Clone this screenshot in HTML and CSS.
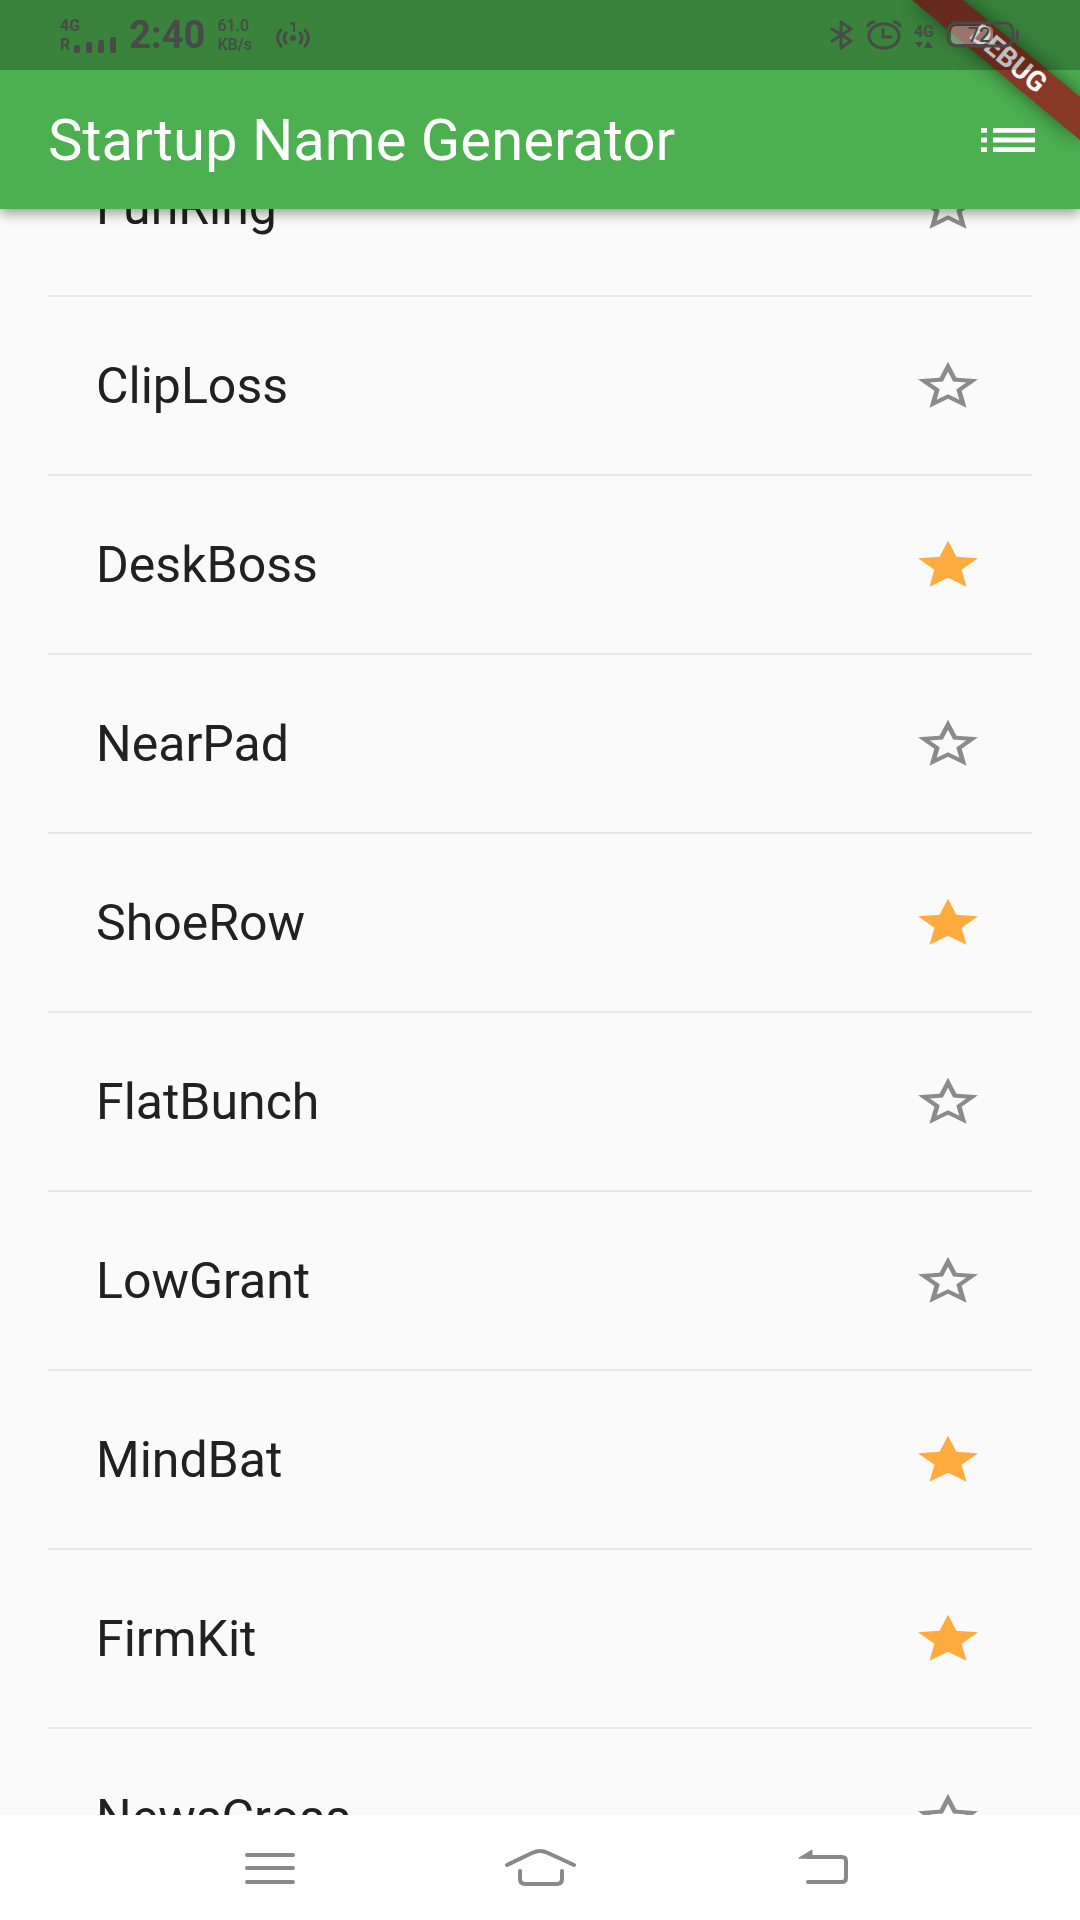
FILE: index.html
```html
<!DOCTYPE html>
<html lang="en">
<head>
    <meta charset="UTF-8">
    <meta name="viewport" content="width=device-width, initial-scale=1.0">
    <title>Startup Name Generator</title>
    <link rel="stylesheet" href="styles.css">
</head>
<body>
    <!-- Shared star shapes -->
    <svg class="defs" aria-hidden="true">
        <symbol id="star" viewBox="0 0 24 24" preserveAspectRatio="none">
            <path d="M12 17.27L18.18 21l-1.64-7.03L22 9.24l-7.19-.61L12 2 9.19 8.63 2 9.24l5.46 4.73L5.82 21z"/>
        </symbol>
        <symbol id="star-border" viewBox="0 0 24 24" preserveAspectRatio="none">
            <path d="M22 9.24l-7.19-.62L12 2 9.19 8.63 2 9.24l5.46 4.73L5.82 21 12 17.27 18.18 21l-1.63-7.03L22 9.24zM12 15.4l-3.76 2.27 1-4.28-3.32-2.88 4.38-.38L12 6.1l1.71 4.04 4.38.38-3.32 2.88 1 4.28L12 15.4z"/>
        </symbol>
    </svg>

    <header class="header">
        <div class="status-bar">
            <div class="status-left">
                <div class="network">
                    <span>4G</span>
                    <span class="signal">R
                        <svg width="43" height="16" viewBox="0 0 43 16">
                            <rect x="0" y="8" width="6" height="8" rx="2"/>
                            <rect x="12" y="5" width="6" height="11" rx="2"/>
                            <rect x="24" y="3" width="6" height="13" rx="2"/>
                            <rect x="36" y="0" width="6" height="16" rx="2"/>
                        </svg>
                    </span>
                </div>
                <span class="time">2:40</span>
                <div class="speed"><span>61.0</span><span>KB/s</span></div>
                <svg class="hotspot" width="34" height="28" viewBox="0 0 34 28">
                    <circle cx="17" cy="17" r="3"/>
                    <path class="line" d="M10 12q-4 5 0 10M5 9q-7 8 0 16M24 12q4 5 0 10M29 9q7 8 0 16"/>
                    <path class="thin" d="M14 3l4-1v9"/>
                </svg>
            </div>
            <div class="status-right">
                <svg width="24" height="30" viewBox="0 0 24 30">
                    <path class="line" d="M2 9l19 12-10 7V2l10 7L2 21"/>
                </svg>
                <svg width="36" height="30" viewBox="0 0 36 30">
                    <ellipse class="line" cx="18" cy="16" rx="15" ry="12"/>
                    <path class="line" d="M17 9v8h8M2 6q2-4 6-4M34 6q-2-4-6-4"/>
                </svg>
                <div class="data">
                    <span>4G</span>
                    <svg width="18" height="8" viewBox="0 0 18 8"><path d="M0 1h8l-4 6zM9 7h9l-5-7z"/></svg>
                </div>
                <svg class="battery" width="74" height="28" viewBox="0 0 74 28">
                    <rect class="charge" x="5" y="5" width="42" height="18" rx="5"/>
                    <rect class="line" x="2" y="2" width="65" height="23" rx="8"/>
                    <path d="M70 8q3 1 3 6t-3 6z"/>
                    <text x="33" y="21" text-anchor="middle">72</text>
                </svg>
            </div>
        </div>
        <div class="app-bar">
            <h1 class="title">Startup Name Generator</h1>
            <button class="icon-button" aria-label="Saved names">
                <svg class="icon" viewBox="0 0 24 24" preserveAspectRatio="none">
                    <path d="M3 13h2v-2H3v2zm0 4h2v-2H3v2zm0-8h2V7H3v2zm4 4h14v-2H7v2zm0 4h14v-2H7v2zM7 7v2h14V7H7z"/>
                </svg>
            </button>
        </div>
        <!-- Debug ribbon over the top right corner -->
        <svg class="ribbon" width="200" height="208" viewBox="0 0 200 208">
            <path class="ribbon-shadow" d="M32 0h51L200 97v43z"/>
            <path class="ribbon-band" d="M32 0h51L200 97v43z"/>
            <text transform="translate(129 58) rotate(40)" x="0" y="10" text-anchor="middle">DEBUG</text>
        </svg>
    </header>

    <main class="content">
        <ul class="names">
            <li class="name"><span>FunRing</span><button class="icon-button" aria-label="Save FunRing"><svg class="icon"><use href="#star-border"/></svg></button></li>
            <li class="name"><span>ClipLoss</span><button class="icon-button" aria-label="Save ClipLoss"><svg class="icon"><use href="#star-border"/></svg></button></li>
            <li class="name"><span>DeskBoss</span><button class="icon-button saved" aria-label="Remove DeskBoss"><svg class="icon"><use href="#star"/></svg></button></li>
            <li class="name"><span>NearPad</span><button class="icon-button" aria-label="Save NearPad"><svg class="icon"><use href="#star-border"/></svg></button></li>
            <li class="name"><span>ShoeRow</span><button class="icon-button saved" aria-label="Remove ShoeRow"><svg class="icon"><use href="#star"/></svg></button></li>
            <li class="name"><span>FlatBunch</span><button class="icon-button" aria-label="Save FlatBunch"><svg class="icon"><use href="#star-border"/></svg></button></li>
            <li class="name"><span>LowGrant</span><button class="icon-button" aria-label="Save LowGrant"><svg class="icon"><use href="#star-border"/></svg></button></li>
            <li class="name"><span>MindBat</span><button class="icon-button saved" aria-label="Remove MindBat"><svg class="icon"><use href="#star"/></svg></button></li>
            <li class="name"><span>FirmKit</span><button class="icon-button saved" aria-label="Remove FirmKit"><svg class="icon"><use href="#star"/></svg></button></li>
            <li class="name"><span>NewsCross</span><button class="icon-button" aria-label="Save NewsCross"><svg class="icon"><use href="#star-border"/></svg></button></li>
        </ul>
    </main>

    <nav class="nav-bar">
        <button class="nav-button" aria-label="Recent apps">
            <svg width="80" height="40" viewBox="0 0 80 40"><path d="M17 7h46M17 20h46M17 34h46"/></svg>
        </button>
        <button class="nav-button" aria-label="Home">
            <svg width="80" height="40" viewBox="0 0 80 40"><path d="M7 17L32 5q8-4 16 0L74 17M20 23v8q0 5 5 5h32q5 0 5-5v-8"/></svg>
        </button>
        <button class="nav-button" aria-label="Back">
            <svg width="80" height="40" viewBox="0 0 80 40"><path d="M38 9h34q4 0 4 4v17q0 4-4 4H38"/><path class="arrow" d="M29 10l13-8v8z"/></svg>
        </button>
    </nav>
</body>
</html>
```
FILE: styles.css
```css
* {
    box-sizing: border-box;
}
body {
    margin: 0;
    height: 100vh;
    display: flex;
    flex-direction: column;
    font-family: Roboto, sans-serif;
    background-color: #fafafa;
    color: #212121;
}
svg {
    display: block;
    fill: currentColor;
}
.defs {
    position: absolute;
    width: 0;
    height: 0;
}
button {
    border: none;
    background: none;
    padding: 0;
    color: inherit;
    cursor: pointer;
}

/* Header */
.header {
    position: relative;
    z-index: 1;
    background-color: #4caf50;
    box-shadow: 0 4px 12px rgba(0, 0, 0, 0.4);
}
.status-bar {
    position: relative;
    z-index: 2;
    height: 70px;
    padding: 0 60px;
    display: flex;
    justify-content: space-between;
    align-items: center;
    background-color: rgba(0, 0, 0, 0.25);
    color: #484c48;
}
.status-left,
.status-right {
    display: flex;
    align-items: center;
    gap: 12px;
}
.network,
.data {
    display: flex;
    flex-direction: column;
    font-size: 16px;
    line-height: 19px;
    font-weight: 700;
}
.signal {
    display: flex;
    align-items: center;
    gap: 4px;
}
.data {
    align-items: center;
}
.time {
    font-size: 38px;
    font-weight: 700;
}
.speed {
    display: flex;
    flex-direction: column;
    font-size: 16px;
    line-height: 19px;
    font-weight: 500;
}
.hotspot {
    margin-left: 12px;
}
.line {
    fill: none;
    stroke: currentColor;
    stroke-width: 3;
    stroke-linecap: round;
    stroke-linejoin: round;
}
.thin {
    fill: none;
    stroke: currentColor;
    stroke-width: 2;
}
.charge {
    fill: #ffffff;
    opacity: 0.35;
}
.battery text {
    font-size: 20px;
    font-weight: 500;
}
.app-bar {
    height: 139px;
    padding: 0 36px 0 48px;
    display: flex;
    justify-content: space-between;
    align-items: center;
    color: #ffffff;
}
.title {
    margin: 0;
    font-size: 58px;
    font-weight: 400;
}
.icon {
    width: 72px;
    height: 58px;
}
.ribbon {
    position: absolute;
    top: 0;
    right: 0;
    z-index: 1;
}
.ribbon-band {
    fill: #883826;
}
.ribbon-shadow {
    fill: #000000;
    opacity: 0.5;
    filter: blur(10px);
}
.ribbon text {
    fill: #ffffff;
    font-size: 28px;
    font-weight: 700;
}

/* Name list, scrolled part of a row down */
.content {
    flex: 1;
    min-height: 0;
    overflow: hidden;
}
.names {
    list-style: none;
    margin: -91px 48px 0;
    padding: 0;
}
.name {
    height: 179px;
    padding: 0 48px;
    display: flex;
    justify-content: space-between;
    align-items: center;
    border-bottom: 2px solid #e8e8e8;
    font-size: 50px;
}
.name .icon-button {
    color: #8b8b8b;
}
.name .saved {
    color: #ffab40;
}

/* Android navigation */
.nav-bar {
    height: 105px;
    padding: 0 12.5%;
    display: grid;
    grid-template-columns: repeat(3, 1fr);
    background-color: #ffffff;
    color: #898989;
}
.nav-button {
    display: flex;
    justify-content: center;
    align-items: center;
}
.nav-button svg {
    fill: none;
    stroke: currentColor;
    stroke-width: 4;
    stroke-linecap: round;
}
.nav-button .arrow {
    fill: currentColor;
    stroke-width: 1;
}
```
